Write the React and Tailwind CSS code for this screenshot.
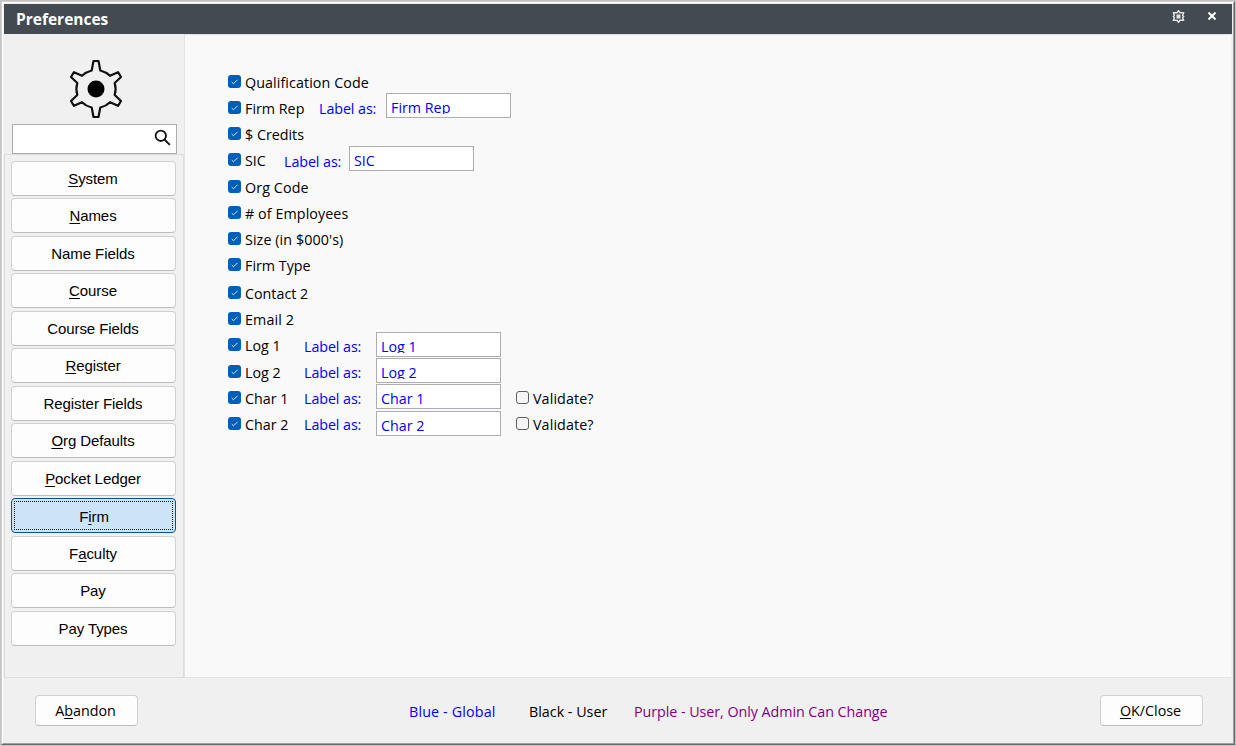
import clsx from 'clsx';

const NAV_ITEMS = [
  { label: 'System', key: 0, gap: '' },
  { label: 'Names', key: 0, gap: 'mt-[2px]' },
  { label: 'Name Fields', key: -1, gap: 'mt-[3px]' },
  { label: 'Course', key: 0, gap: 'mt-[2px]' },
  { label: 'Course Fields', key: -1, gap: 'mt-[3px]' },
  { label: 'Register', key: 0, gap: 'mt-[2px]' },
  { label: 'Register Fields', key: -1, gap: 'mt-[3px]' },
  { label: 'Org Defaults', key: 0, gap: 'mt-[2px]' },
  { label: 'Pocket Ledger', key: 0, gap: 'mt-[3px]' },
  { label: 'Firm', key: 1, gap: 'mt-[2px]', active: true },
  { label: 'Faculty', key: 1, gap: 'mt-[3px]' },
  { label: 'Pay', key: -1, gap: 'mt-[2px]' },
  { label: 'Pay Types', key: -1, gap: 'mt-[3px]' },
];

const FIELDS = [
  { label: 'Qualification Code', row: 'h-[26px] tracking-[0.08px]' },
  { label: 'Firm Rep', row: 'h-[26px]', name: 'w-[74px]', as: 'w-[67px] mt-[2px]', value: 'Firm Rep', box: '-mt-px' },
  { label: '$ Credits', row: 'h-[26px]' },
  { label: 'SIC', row: 'h-[27px]', name: 'w-[39px]', as: 'w-[65px] mt-[3px]', value: 'SIC', box: '' },
  { label: 'Org Code', row: 'h-[26px] tracking-[0.1px]' },
  { label: '# of Employees', row: 'h-[26px] tracking-[0.08px]' },
  { label: "Size (in $000's)", row: 'h-[26px] tracking-[0.08px]' },
  { label: 'Firm Type', row: 'h-[28px]' },
  { label: 'Contact 2', row: 'h-[26px]' },
  { label: 'Email 2', row: 'h-[26px] tracking-[0.1px]' },
  { label: 'Log 1', row: 'h-[27px]', name: 'w-[59px]', as: 'w-[72px] mt-[3px]', value: 'Log 1', box: 'mt-px' },
  { label: 'Log 2', row: 'h-[26px]', name: 'w-[59px]', as: 'w-[72px] mt-[2px]', value: 'Log 2', box: '' },
  { label: 'Char 1', row: 'h-[26px]', name: 'w-[59px]', as: 'w-[72px] mt-[2px]', value: 'Char 1', box: '', validate: true },
  { label: 'Char 2', row: 'h-[26px]', name: 'w-[59px]', as: 'w-[72px] mt-[2px]', value: 'Char 2', box: 'mt-px', validate: true },
];

function Mnemonic({ text, index }) {
  if (index < 0) return text;
  return (
    <>
      {text.slice(0, index)}
      <span className="underline decoration-1 underline-offset-2">{text[index]}</span>
      {text.slice(index + 1)}
    </>
  );
}

function Checkbox({ checked }) {
  if (!checked) {
    return <span className="mt-[7px] h-[13px] w-[13px] shrink-0 rounded-[3px] border border-[#5f5f5f] bg-[#f5f5f5]" />;
  }
  return (
    <span className="mt-[7px] h-[13px] w-[13px] shrink-0 rounded-[3px] bg-[#005fb8]">
      <svg viewBox="0 0 13 13" className="h-[13px] w-[13px]" fill="none" stroke="#d5e6f5" strokeWidth="1">
        <path d="M3.700 7l1.800 1.800 4-4" />
      </svg>
    </span>
  );
}

function FieldRow({ field }) {
  return (
    <div className={clsx('flex items-start leading-[26px] whitespace-nowrap', field.row)}>
      <Checkbox checked />
      <span className={clsx('ml-1 mt-[2px] shrink-0', field.name)}>{field.label}</span>
      {field.value && (
        <>
          <span className={clsx('shrink-0 tracking-[-0.08px] text-[#0000ff]', field.as)}>Label as:</span>
          <div className={clsx('h-[25px] w-[125px] shrink-0 border border-[#abadb3] bg-white', field.box)}>
            <div className="h-[20px] overflow-hidden pl-1 leading-[28px] text-[#0000ff]">{field.value}</div>
          </div>
        </>
      )}
      {field.validate && (
        <div className="ml-[15px] flex">
          <Checkbox />
          <span className="ml-1 mt-[2px] tracking-[0.1px]">Validate?</span>
        </div>
      )}
    </div>
  );
}

function NavButton({ item }) {
  return (
    <button
      className={clsx(
        'h-[35px] w-[165px] shrink-0 rounded-[4px] border font-["Liberation_Sans"] text-[15px] tracking-[-0.08px]',
        item.gap,
        item.active
          ? 'border-[#005499] bg-[#cce4f7] p-[2px]'
          : 'border-[#d0d0d0] border-b-[#bcbcbc] bg-[#fdfdfd]'
      )}
    >
      <span
        className={clsx(
          'flex h-full w-full items-center justify-center',
          item.active ? 'border border-dotted border-black pt-[3px] pl-px' : 'pt-[2px] pr-px'
        )}
      >
        <span className="whitespace-pre">
          <Mnemonic text={item.label} index={item.key} />
        </span>
      </span>
    </button>
  );
}

function GearIcon() {
  return (
    <svg viewBox="0 0 54 60" className="h-[60px] w-[54px]" fill="none" stroke="#111" strokeWidth="2.200" strokeLinejoin="round">
      <path d="M24.500 2h5l1.800 9.500q6 1.500 9.700 5.300l8-3.600 3 4.800-6.300 6q1.800 6 0 12l6.300 6-3 4.800-8-3.600q-3.700 3.800-9.700 5.300L29.500 58h-5l-1.800-9.500q-6-1.500-9.700-5.300l-8 3.600-3-4.800 6.300-6q-1.800-6 0-12L2 18l3-4.800 8 3.600q3.700-3.800 9.700-5.300z" />
      <circle cx="27" cy="30" r="8.500" fill="#000" stroke="none" />
    </svg>
  );
}

export default function App() {
  return (
    <div className='h-[746px] w-[1236px] overflow-hidden border border-[#c4c4c4] font-["Open_Sans"] text-[14.3px] text-black'>
      <div className="h-full border border-t-[#cfcfcf] border-r-[#696969] border-b-[#696969] border-l-[#cfcfcf]">
        <div className="flex h-full flex-col border border-t-white border-r-[#a0a0a0] border-b-[#a0a0a0] border-l-white bg-[#f0f0f0] pt-px pl-px">
          <header className="flex h-[30px] w-[1228px] shrink-0 items-center bg-[#434a51] pl-3 text-white">
            <h1 className="mt-px text-[15.5px] font-bold">Preferences</h1>
            <svg viewBox="0 0 13 13" className="mt-[-6px] ml-auto h-[13px] w-[13px]" fill="none" stroke="#e4e4e4" strokeWidth="1.500">
              <path d="M6.500 .8l1.500 2 3.500-.1-.8 2.700.9 1.100-.9 1.100.8 2.700-3.500-.1-1.500 2-1.500-2-3.500.1.800-2.700-.9-1.100.9-1.100-.8-2.700 3.500.1z" />
              <rect x="4.500" y="4.500" width="4" height="4" fill="#e4e4e4" stroke="none" />
            </svg>
            <svg viewBox="0 0 8 8" className="mt-[-6px] mr-4 ml-[23px] h-2 w-2" stroke="#fff" strokeWidth="2">
              <path d="M.5 .5l7 7M7.500 .5l-7 7" />
            </svg>
          </header>
          <div className="flex h-[644px] shrink-0">
            <aside className="flex w-[181px] shrink-0 flex-col border-r border-[#e2e2e2]">
              <div className="flex h-[90px] justify-center pt-[25px] pl-[3px]">
                <GearIcon />
              </div>
              <div className="ml-2 flex h-[30px] w-[165px] shrink-0 items-start justify-end border border-[#abadb3] bg-white pt-[4px] pr-[5px]">
                <svg viewBox="0 0 17 17" className="h-[17px] w-[17px]" fill="none" stroke="#111" strokeWidth="1.800">
                  <circle cx="6.800" cy="6.800" r="5.200" />
                  <path d="M10.500 10.500l5.300 5.300" />
                </svg>
              </div>
              <nav className="flex w-[180px] flex-1 flex-col border border-[#dcdcdc] pt-[6px] pl-[6px]">
                {NAV_ITEMS.map((item) => (
                  <NavButton key={item.label} item={item} />
                ))}
              </nav>
            </aside>
            <main className="w-[1046px] border-t border-b border-[#e4e4e4] bg-[#f9f9f9] pt-[33px] pl-[43px]">
              {FIELDS.map((field) => (
                <FieldRow key={field.label} field={field} />
              ))}
            </main>
          </div>
          <footer className="flex items-start pt-[17px]">
            <button className="ml-[31px] h-[31px] w-[103px] shrink-0 rounded-[4px] border border-[#d0d0d0] border-b-[#bcbcbc] bg-[#fdfdfd] pr-[2px]">
              <Mnemonic text="Abandon" index={1} />
            </button>
            <div className="ml-[271px] flex h-[33px] items-center whitespace-nowrap">
              <span className="w-[120px] tracking-[0.15px] text-[#0000ff]">Blue - Global</span>
              <span className="w-[105px]">Black - User</span>
              <span className="w-[466px] tracking-[-0.05px] text-[#800080]">Purple - User, Only Admin Can Change</span>
            </div>
            <button className="h-[31px] w-[103px] shrink-0 rounded-[4px] border border-[#d0d0d0] border-b-[#bcbcbc] bg-[#fdfdfd] pr-[2px]">
              <Mnemonic text="OK/Close" index={0} />
            </button>
          </footer>
        </div>
      </div>
    </div>
  );
}
